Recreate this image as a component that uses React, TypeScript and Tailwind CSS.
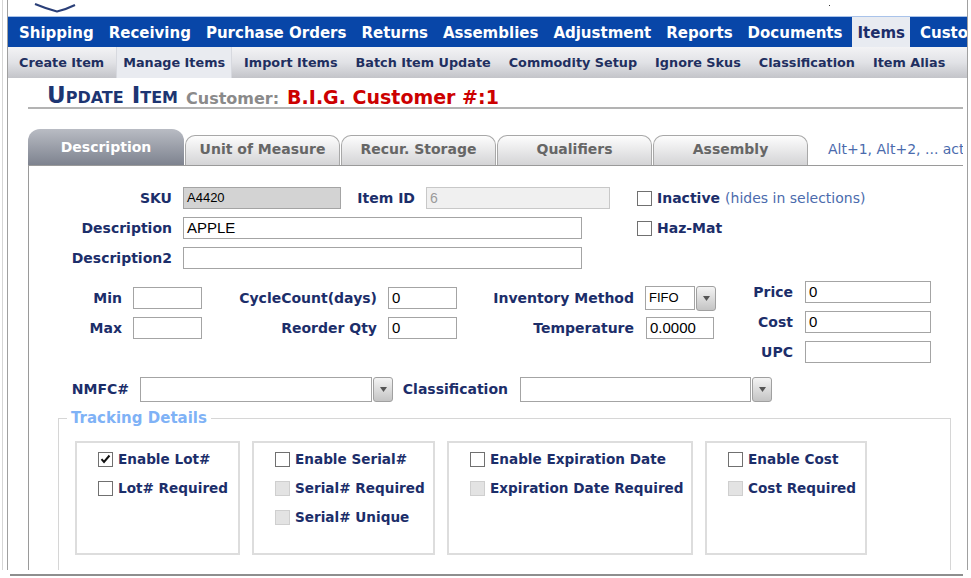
import React from 'react';

const navy = 'text-[#1c2e6a]';

const topNav = ['Shipping', 'Receiving', 'Purchase Orders', 'Returns', 'Assemblies', 'Adjustment', 'Reports', 'Documents', 'Items', 'Customers'];
const subNav = ['Create Item', 'Manage Items', 'Import Items', 'Batch Item Update', 'Commodity Setup', 'Ignore Skus', 'Classification', 'Item Alias'];

function Input({ w, value = '', bg = 'bg-white border-[#a4a4a4]', text = 'text-[15px] text-black', h = 'h-[22px]' }: { w: string; value?: string; bg?: string; text?: string; h?: string }) {
    return (
        <div className={`${w} ${h} ${bg} ${text} border flex items-center pl-[3px] font-['Liberation_Sans',sans-serif] shrink-0`}>
            {value}
        </div>
    );
}

function DropBtn() {
    return (
        <div className="w-[20px] h-[25px] ml-px rounded-[3px] border border-[#a0a0a0] bg-gradient-to-b from-[#f4f4f4] to-[#c4c4c4] flex items-center justify-center shrink-0">
            <svg width="7" height="5" viewBox="0 0 7 5"><path d="M0 0h7L3.5 5z" fill="#555" /></svg>
        </div>
    );
}

function Check({ state }: { state: 'on' | 'off' | 'disabled' }) {
    if (state === 'disabled') {
        return <div className="w-[15px] h-[15px] border border-[#cfcfcf] bg-[#e3e3e3] shrink-0" />;
    }
    return (
        <div className="w-[15px] h-[15px] border border-[#707070] bg-white shrink-0 flex items-center justify-center">
            {state === 'on' && (
                <svg width="11" height="10" viewBox="0 0 11 10">
                    <path d="M1.5 5.2 L4 8 L9.5 1.5" fill="none" stroke="#111" strokeWidth="2" />
                </svg>
            )}
        </div>
    );
}

function Label({ w, children }: { w: string; children: React.ReactNode }) {
    return <div className={`${w} text-right shrink-0 font-bold text-[14px] ${navy}`}>{children}</div>;
}

const trackingBoxes: { w: string; items: [string, 'on' | 'off' | 'disabled'][] }[] = [
    { w: 'w-[165px]', items: [['Enable Lot#', 'on'], ['Lot# Required', 'off']] },
    { w: 'w-[183px]', items: [['Enable Serial#', 'off'], ['Serial# Required', 'disabled'], ['Serial# Unique', 'disabled']] },
    { w: 'w-[246px]', items: [['Enable Expiration Date', 'off'], ['Expiration Date Required', 'disabled']] },
    { w: 'w-[162px]', items: [['Enable Cost', 'off'], ['Cost Required', 'disabled']] },
];

export default function App() {
    return (
        <div className="w-[971px] h-[578px] bg-white overflow-hidden font-['DejaVu_Sans',sans-serif]">
            <div className="ml-[2px] border-l border-[#d6d6d6] h-[570px]">
                <div className="ml-[4px] w-[961px] h-[570px] border-l border-r border-[#a0a0a0] overflow-hidden flex flex-col">
                    {/* logo remnant */}
                    <div className="h-[16px] relative shrink-0">
                        <svg className="absolute left-[25px] top-[3px]" width="44" height="10" viewBox="0 0 44 10">
                            <path d="M2 1 Q14 6 24 8.5 Q34 6 42 2" fill="none" stroke="#2a3f78" strokeWidth="2" />
                        </svg>
                        <div className="absolute left-[821px] top-[5px] w-px h-px bg-[#333]" />
                    </div>

                    {/* main nav */}
                    <div className="h-px bg-[#a9c3ea] shrink-0" />
                    <div className="h-[30px] bg-[#0846a8] flex items-stretch pl-[6px] gap-[5px] shrink-0 whitespace-nowrap">
                        {topNav.map((n) => (
                            <div
                                key={n}
                                className={`px-[5px] pt-[2px] flex items-center font-bold text-[15px] ${n === 'Items' ? 'bg-[#e8ebf1] text-[#1c2e6a]' : 'text-white'}`}
                            >
                                {n}
                            </div>
                        ))}
                    </div>

                    {/* sub nav */}
                    <div className="h-[31px] bg-gradient-to-b from-[#f3f3f5] via-[#e1e2e6] to-[#c3c4c9] flex items-stretch pl-[5px] gap-[6px] shrink-0 whitespace-nowrap">
                        {subNav.map((n) => (
                            <div
                                key={n}
                                className={`px-[6px] pt-[1px] flex items-center font-bold text-[12.8px] text-[#1f2f60] ${n === 'Manage Items' ? 'bg-[#e9ebf0] border-x border-[#d7d9df]' : ''}`}
                            >
                                {n}
                            </div>
                        ))}
                    </div>

                    {/* title */}
                    <div className="ml-[20px] w-[935px] h-[31px] border-b-2 border-[#b3b3b3] flex items-end pl-[19px] whitespace-nowrap shrink-0">
                        <span className="font-bold text-[23px] leading-none text-[#1d3572] [font-variant:small-caps]">Update Item</span>
                        <span className="ml-[8px] font-bold text-[16px] leading-none text-[#8a8a8a]">Customer:</span>
                        <span className="ml-[8px] font-bold text-[19px] leading-none text-[#cc0000]">B.I.G. Customer #:1</span>
                    </div>

                    {/* tabs */}
                    <div className="ml-[20px] w-[935px] pt-[20px] flex items-end border-b border-[#9a9a9a] whitespace-nowrap overflow-hidden shrink-0">
                        <div className="w-[156px] h-[36px] pt-[1px] rounded-t-[12px] bg-gradient-to-b from-[#b9bcc4] to-[#7e838f] flex items-center justify-center font-bold text-[14px] text-white shrink-0">
                            Description
                        </div>
                        {['Unit of Measure', 'Recur. Storage', 'Qualifiers', 'Assembly'].map((t) => (
                            <div
                                key={t}
                                className="ml-px w-[155px] h-[30px] pb-[2px] rounded-t-[10px] border border-b-0 border-[#a8a8a8] bg-gradient-to-b from-[#fdfdfd] to-[#d4d4d6] flex items-center justify-center font-bold text-[14px] text-[#666] shrink-0"
                            >
                                {t}
                            </div>
                        ))}
                        <div className="ml-[20px] h-[30px] pb-[2px] flex items-center text-[14px] text-[#4b6bad]">Alt+1, Alt+2, ... activate tabs</div>
                    </div>

                    {/* panel */}
                    <div className="ml-[20px] flex-1 border-l border-[#9a9a9a] pt-[17px]">
                        <div className="flex items-center h-[30px]">
                            <Label w="w-[143px]">SKU</Label>
                            <Input w="w-[158px] ml-[11px]" value="A4420" bg="bg-[#d3d3d3] border-[#a4a4a4]" text="text-[13px] text-black" />
                            <Label w="w-[74px]">Item ID</Label>
                            <Input w="w-[184px] ml-[11px]" value="6" bg="bg-[#f0f0f0] border-[#c8c8c8]" text="text-[14px] text-[#9a9a9a]" />
                            <div className="ml-[27px] flex items-center gap-[5px] whitespace-nowrap">
                                <Check state="off" />
                                <span className={`font-bold text-[14px] ${navy}`}>Inactive</span>
                                <span className="text-[14px] text-[#4b6bad]">(hides in selections)</span>
                            </div>
                        </div>
                        <div className="flex items-center h-[30px]">
                            <Label w="w-[143px]">Description</Label>
                            <Input w="w-[399px] ml-[11px]" value="APPLE" />
                            <div className="ml-[55px] flex items-center gap-[5px]">
                                <Check state="off" />
                                <span className={`font-bold text-[14px] ${navy}`}>Haz-Mat</span>
                            </div>
                        </div>
                        <div className="flex items-center h-[30px]">
                            <Label w="w-[143px]">Description2</Label>
                            <Input w="w-[399px] ml-[11px]" />
                        </div>

                        {/* numbers */}
                        <div className="flex mt-[4px]">
                            <div className="pt-[6px] flex flex-col">
                                <div className="flex items-center h-[30px]">
                                    <Label w="w-[93px]">Min</Label>
                                    <Input w="w-[69px] ml-[11px]" />
                                </div>
                                <div className="flex items-center h-[30px]">
                                    <Label w="w-[93px]">Max</Label>
                                    <Input w="w-[69px] ml-[11px]" />
                                </div>
                            </div>
                            <div className="pt-[6px] flex flex-col">
                                <div className="flex items-center h-[30px]">
                                    <Label w="w-[175px]">CycleCount(days)</Label>
                                    <Input w="w-[69px] ml-[11px]" value="0" />
                                </div>
                                <div className="flex items-center h-[30px]">
                                    <Label w="w-[175px]">Reorder Qty</Label>
                                    <Input w="w-[69px] ml-[11px]" value="0" />
                                </div>
                            </div>
                            <div className="pt-[6px] flex flex-col w-[259px]">
                                <div className="flex items-center h-[30px]">
                                    <Label w="w-[177px]">Inventory Method</Label>
                                    <Input w="w-[50px] ml-[11px]" h="h-[24px]" value="FIFO" text="text-[13px] text-black" />
                                    <DropBtn />
                                </div>
                                <div className="flex items-center h-[30px]">
                                    <Label w="w-[177px]">Temperature</Label>
                                    <Input w="w-[68px] ml-[12px]" value="0.0000" />
                                </div>
                            </div>
                            <div className="flex flex-col">
                                {[['Price', '0'], ['Cost', '0'], ['UPC', '']].map(([l, v]) => (
                                    <div key={l} className="flex items-center h-[30px]">
                                        <Label w="w-[77px]">{l}</Label>
                                        <Input w="w-[126px] ml-[12px]" value={v} />
                                    </div>
                                ))}
                            </div>
                        </div>

                        <div className="flex items-center h-[30px] mt-[7px]">
                            <Label w="w-[100px]">NMFC#</Label>
                            <Input w="w-[232px] ml-[11px]" h="h-[25px]" />
                            <DropBtn />
                            <Label w="w-[115px]">Classification</Label>
                            <Input w="w-[231px] ml-[12px]" h="h-[25px]" />
                            <DropBtn />
                        </div>

                        {/* tracking */}
                        <fieldset className="ml-[29px] mt-[3px] w-[893px] border border-[#d6d6d6] pl-[16px] pt-[11px] pb-[20px]">
                            <legend className="ml-[-8px] px-[4px] font-bold text-[15px] text-[#7fb2f6]">Tracking Details</legend>
                            <div className="flex gap-[12px]">
                                {trackingBoxes.map((b, i) => (
                                    <div key={i} className={`${b.w} h-[114px] border-2 border-[#dddddd] pt-[2px] pl-[21px]`}>
                                        {b.items.map(([t, s]) => (
                                            <div key={t} className="h-[29px] flex items-center gap-[5px] whitespace-nowrap">
                                                <Check state={s} />
                                                <span className={`font-bold text-[13.6px] ${navy}`}>{t}</span>
                                            </div>
                                        ))}
                                    </div>
                                ))}
                            </div>
                        </fieldset>
                    </div>
                </div>
            </div>
            <div className="ml-[10px] mt-[4px] w-[953px] h-[2px] bg-[#8e8e8e]" />
        </div>
    );
}
